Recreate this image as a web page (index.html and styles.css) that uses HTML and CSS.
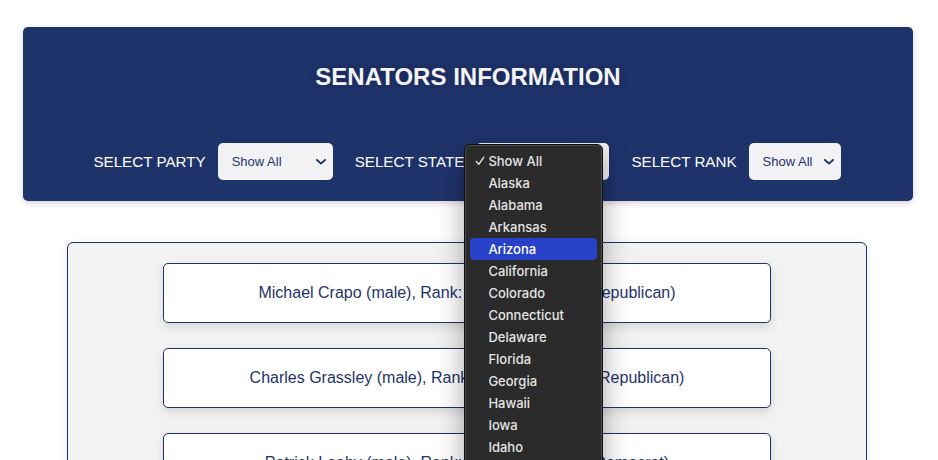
FILE: index.html
```html
<!DOCTYPE html>
<html lang="en">
<head>
<meta charset="utf-8">
<title>Senators Information</title>
<link rel="stylesheet" href="styles.css">
</head>
<body>
<div class="page">
  <header class="hero">
    <h1 class="title">SENATORS INFORMATION</h1>
    <div class="filters">
      <div class="filter">
        <span class="label">SELECT PARTY</span>
        <div class="select select-party">
          <span>Show All</span>
          <svg class="chev" width="10" height="6" viewBox="0 0 10 6"><path d="M1 1l4 3.6L9 1" fill="none" stroke="#1f336b" stroke-width="1.9" stroke-linecap="round" stroke-linejoin="round"/></svg>
        </div>
      </div>
      <div class="filter">
        <span class="label">SELECT STATE</span>
        <div class="select select-state">
          <span>Show All</span>
          <svg class="chev" width="10" height="6" viewBox="0 0 10 6"><path d="M1 1l4 3.6L9 1" fill="none" stroke="#1f336b" stroke-width="1.9" stroke-linecap="round" stroke-linejoin="round"/></svg>
          <ul class="menu">
            <li class="opt checked"><svg class="check" width="10" height="10" viewBox="0 0 10 10"><path d="M1.2 5.4L3.8 8.3L8.8 1.2" fill="none" stroke="#e6e6e6" stroke-width="1.4" stroke-linecap="round" stroke-linejoin="round"/></svg>Show All</li>
            <li class="opt">Alaska</li>
            <li class="opt">Alabama</li>
            <li class="opt">Arkansas</li>
            <li class="opt active">Arizona</li>
            <li class="opt">California</li>
            <li class="opt">Colorado</li>
            <li class="opt">Connecticut</li>
            <li class="opt">Delaware</li>
            <li class="opt">Florida</li>
            <li class="opt">Georgia</li>
            <li class="opt">Hawaii</li>
            <li class="opt">Iowa</li>
            <li class="opt">Idaho</li>
            <li class="opt">Illinois</li>
            <li class="opt">Indiana</li>
          </ul>
        </div>
      </div>
      <div class="filter">
        <span class="label">SELECT RANK</span>
        <div class="select select-rank">
          <span>Show All</span>
          <svg class="chev" width="10" height="6" viewBox="0 0 10 6"><path d="M1 1l4 3.6L9 1" fill="none" stroke="#1f336b" stroke-width="1.9" stroke-linecap="round" stroke-linejoin="round"/></svg>
        </div>
      </div>
    </div>
  </header>

  <main class="panel">
    <div class="card">Michael Crapo (male), Rank: senior, State: ID (Republican)</div>
    <div class="card">Charles Grassley (male), Rank: senior, State: IA (Republican)</div>
    <div class="card">Patrick Leahy (male), Rank: senior, State: VT (Democrat)</div>
    <div class="card">Richard Shelby (male), Rank: senior, State: AL (Republican)</div>
  </main>
</div>
</body>
</html>
```

FILE: styles.css
```css
html, body {
  margin: 0;
  padding: 0;
  overflow: hidden;
  background: #ffffff;
}

body {
  font-family: "Liberation Sans", Arial, sans-serif;
  color: #1f336b;
}

.page {
  padding: 27px 25px 0 23px;
}

.hero {
  background: #1f336b;
  border-radius: 5px;
  box-shadow: 0 2px 6px rgba(0, 0, 0, 0.18);
  padding: 36px 0 21px;
  display: flex;
  flex-direction: column;
  align-items: center;
}

.title {
  margin: 0;
  font-size: 24px;
  line-height: 28px;
  font-weight: bold;
  color: #f4f4f6;
  text-shadow: 0 0 8px rgba(0, 0, 0, 0.25);
}

.filters {
  margin-top: 52px;
  display: flex;
  align-items: center;
  gap: 22px;
  margin-left: -2px;
}

.filter {
  display: flex;
  align-items: center;
  gap: 12px;
}

.label {
  color: #ffffff;
  font-size: 15.2px;
  line-height: 18px;
}

.select {
  position: relative;
  height: 37px;
  box-sizing: border-box;
  background: #f2f2f4;
  border-radius: 5px;
  display: flex;
  align-items: center;
  justify-content: space-between;
  padding: 0 7px 0 14px;
  font-size: 13px;
  color: #1f336b;
}

.select-party { width: 115px; }
.select-state { width: 133px; }
.select-rank  { width: 92px; }

.chev {
  display: block;
  margin-top: 1px;
}

.menu {
  position: absolute;
  left: -12px;
  top: 1px;
  width: 139px;
  box-sizing: border-box;
  margin: 0;
  padding: 5px 5px 6px;
  list-style: none;
  background: #2b2b2b;
  border: 1px solid #0d0d0d;
  border-radius: 6px;
  box-shadow: inset 0 0 0 1px #4e4e4e, 0 10px 28px rgba(0, 0, 0, 0.35);
  font-family: Inter, "Noto Sans", sans-serif;
  font-size: 13px;
  font-weight: 500;
  color: #e4e4e4;
  z-index: 5;
}

.opt {
  height: 22px;
  line-height: 22px;
  padding-left: 18px;
  border-radius: 4px;
  position: relative;
  white-space: nowrap;
}

.opt.active {
  background: #2741c8;
  color: #ffffff;
}

.check {
  position: absolute;
  left: 5px;
  top: 6px;
}

.panel {
  width: 800px;
  box-sizing: border-box;
  margin: 41px 0 0 44px;
  background: #f2f2f2;
  border: 1px solid #1f336b;
  border-radius: 6px;
  box-shadow: 0 2px 8px rgba(0, 0, 0, 0.1);
  padding: 20px 0 40px;
  display: flex;
  flex-direction: column;
  align-items: center;
  gap: 25px;
}

.card {
  width: 608px;
  height: 60px;
  box-sizing: border-box;
  background: #ffffff;
  border: 1px solid #1f336b;
  border-radius: 5px;
  box-shadow: 0 4px 10px rgba(0, 0, 0, 0.12);
  display: flex;
  align-items: center;
  justify-content: center;
  font-size: 16px;
  color: #1f336b;
}
```
